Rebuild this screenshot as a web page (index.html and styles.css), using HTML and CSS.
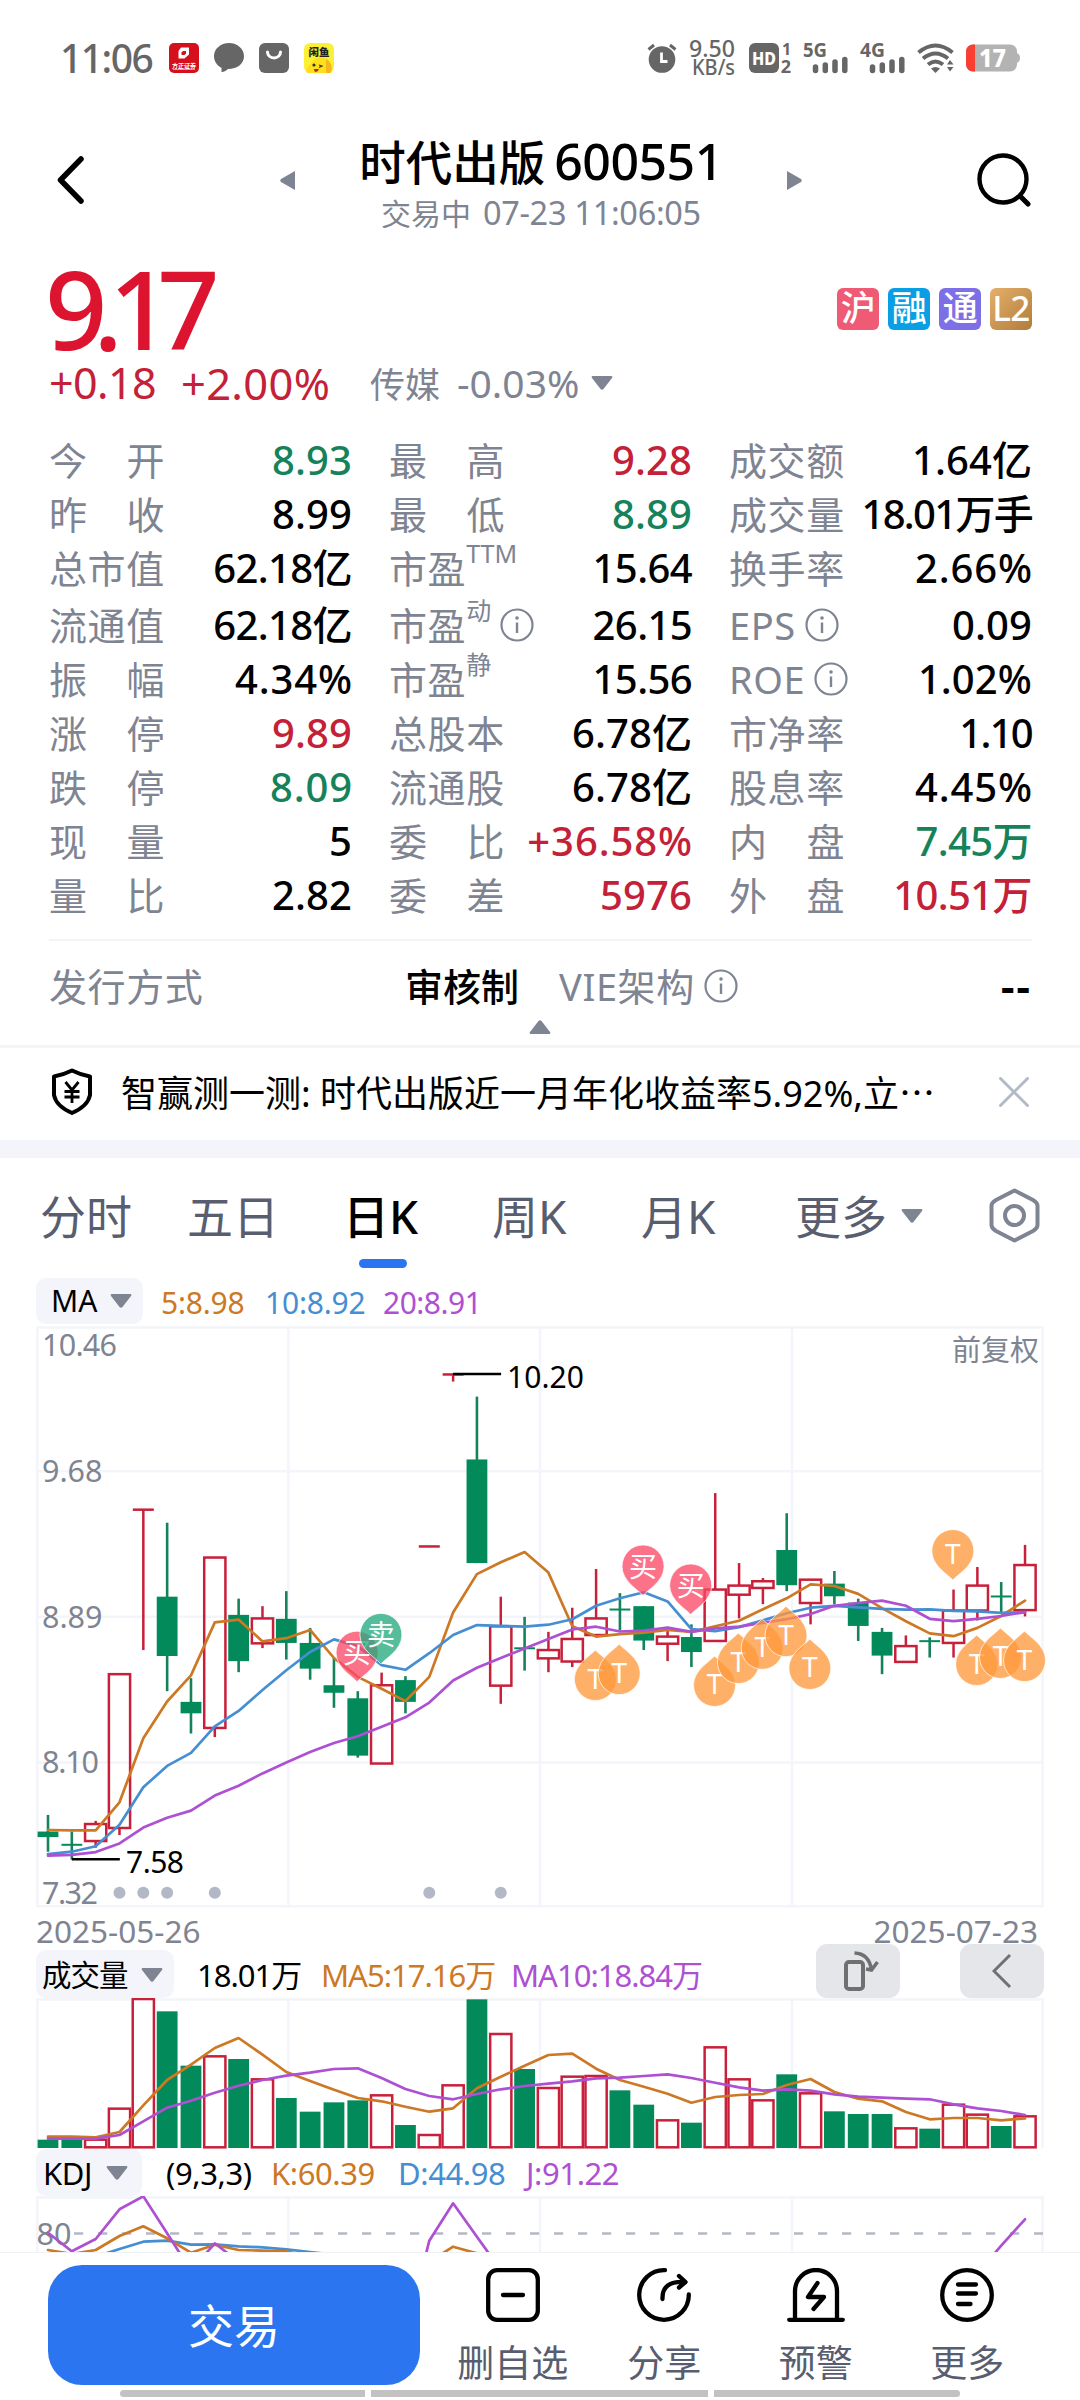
FILE: index.html
```html
<!DOCTYPE html>
<html lang="zh-CN">
<head>
<meta charset="utf-8">
<title>时代出版 600551</title>
<link rel="stylesheet" href="styles.css">
</head>
<body>
<svg class="defs" width="0" height="0">
  <symbol id="info" viewBox="0 0 34 34"><circle cx="17" cy="17" r="15.5" fill="none" stroke="currentColor" stroke-width="2.2"/><path d="M17 14.5V25" stroke="currentColor" stroke-width="2.4"/><circle cx="17" cy="10" r="1.8" fill="currentColor"/></symbol>
  <symbol id="tri" viewBox="0 0 22 14"><path d="M1.5 0H20.500Q22 .5 21 2L12.500 13Q11 14.500 9.500 13L1 2Q0 .5 1.500 0Z" fill="currentColor"/></symbol>
</svg>

<header class="status">
  <span class="clock">11:06</span>
  <div class="apps">
    <svg width="30" height="30" viewBox="0 0 30 30"><rect width="30" height="30" rx="5" fill="#d50f1c"/><path d="M12 4.500h8v7l-4.500 4H9.500V8z" fill="#fff"/><path d="M14 8h3v2.500l-1.500 1.500h-3v-2.500z" fill="#d50f1c"/><text x="15" y="24.500" font-size="6" font-weight="700" fill="#fff" text-anchor="middle">方正证券</text><path d="M4 26.500h22" stroke="#fff" stroke-width=".8" opacity=".7"/></svg>
    <svg width="30" height="30" viewBox="0 0 30 30"><path d="M15 0C6.500 0 0 6 0 13.200c0 5 3 9.300 7.500 11.600V29c3 0 5-1.500 6.500-3C23.500 26 30 20.500 30 13.200 30 6 23.500 0 15 0Z" fill="#666"/></svg>
    <svg width="30" height="30" viewBox="0 0 30 30"><rect width="30" height="30" rx="6" fill="#666"/><path d="M8.500 9a6.500 6 0 0 0 13 0" fill="none" stroke="#fff" stroke-width="3" stroke-linecap="round"/></svg>
    <svg width="30" height="30" viewBox="0 0 30 30"><rect width="30" height="30" rx="6" fill="#fbf035"/><path d="M3 30c-3-6 4-8 6-12 4-5 12-4 15-1 4 3 5 9 3 13z" fill="#ffe01a"/><path d="M22 16c6 3 7 10 4 14h-4z" fill="#f5b81c"/><circle cx="10" cy="22" r="1.600" fill="#333"/><path d="M15 22l3 1-3 1.500" fill="none" stroke="#333" stroke-width="1.200"/><path d="M10 26h5q-1 3-3 3t-2-3" fill="#b03020"/><text x="15" y="13" font-size="10.500" font-weight="900" fill="#222" text-anchor="middle">闲鱼</text></svg>
  </div>
  <div class="sys">
    <svg width="30" height="30" viewBox="0 0 30 30"><circle cx="15" cy="16.500" r="13.300" fill="#666"/><path d="M1.500 6.500L7 2M28.500 6.500L23 2" stroke="#666" stroke-width="3"/><path d="M14.500 9.500V18.500H20.500" fill="none" stroke="#fff" stroke-width="2.800"/></svg>
    <svg class="speed" width="48" height="38" viewBox="0 0 48 38"><text x="1" y="17.500" font-size="24" font-weight="500" textLength="46" lengthAdjust="spacingAndGlyphs">9.50</text><text x="4" y="35.500" font-size="21" font-weight="500" textLength="43" lengthAdjust="spacingAndGlyphs">KB/s</text></svg>
    <svg class="hd" width="44" height="34" viewBox="0 0 44 34"><rect y="2" width="30" height="30" rx="6" fill="#666"/><text x="3" y="23.500" font-size="18" font-weight="800" fill="#fff" textLength="24" lengthAdjust="spacingAndGlyphs">HD</text><text x="37.500" y="14" font-size="16" font-weight="700" fill="#666" text-anchor="middle">1</text><text x="37" y="31.500" font-size="18" font-weight="700" fill="#666" text-anchor="middle">2</text></svg>
    <svg class="g5" width="45" height="32" viewBox="0 0 45 32"><text y="15" font-size="19.500" font-weight="700" fill="#666" textLength="24" lengthAdjust="spacingAndGlyphs">5G</text><path d="M12.500 25v3.500M22.300 23v5.500M32 20v8.500M41.800 17.500v11" stroke="#666" stroke-width="5.500" stroke-linecap="round"/></svg>
    <svg class="g4" width="45" height="32" viewBox="0 0 45 32"><text y="15" font-size="19.500" font-weight="700" fill="#666" textLength="25" lengthAdjust="spacingAndGlyphs">4G</text><path d="M12.500 25v3.500M22.300 23v5.500M32 20v8.500M41.800 17.500v11" stroke="#666" stroke-width="5.500" stroke-linecap="round"/></svg>
    <svg class="wifi" width="38" height="30" viewBox="0 0 38 30"><path d="M1.500 9.500Q18.500-4.500 35.500 9.500M6 15.500Q18.500 5.500 31 15.500M11 21.500Q18.500 15.500 26 21.500" fill="none" stroke="#666" stroke-width="4"/><path d="M14 25.500q4.500-3 9 0L18.500 30z" fill="#666"/><path d="M30 21.500l3-4.500 3.500 4.500zM30 24l3 4.500 3.500-4.500z" fill="#666"/></svg>
    <svg width="54" height="28" viewBox="0 0 54 28"><path d="M50 9q4 .5 4 5t-4 5z" fill="#b3b3b3"/><rect width="51" height="27" y=".5" rx="7" fill="#b3b3b3"/><path d="M9 .5H7a7 7 0 0 0-7 7v13a7 7 0 0 0 7 7h2z" fill="#fa3e32"/><text x="13" y="22.500" font-size="24" font-weight="800" fill="#fff" textLength="27" lengthAdjust="spacingAndGlyphs">17</text></svg>
  </div>
</header>

<nav class="head">
  <svg width="28" height="48" viewBox="0 0 28 48"><path d="M25 3L4.500 24L25 45" fill="none" stroke="#000" stroke-width="5.500" stroke-linecap="round" stroke-linejoin="round"/></svg>
  <svg class="prev" width="15" height="21" viewBox="0 0 15 21"><path d="M15 1v19L1 12Q-.5 10.500 1 9z" fill="#7f8492"/></svg>
  <div class="title">
    <h1>时代出版<span>600551</span></h1>
    <p>交易中 <span>07-23 11:06:05</span></p>
  </div>
  <svg class="next" width="15" height="21" viewBox="0 0 15 21"><path d="M0 1v19L14 12Q15.500 10.500 14 9z" fill="#7f8492"/></svg>
  <svg class="search" width="54" height="54" viewBox="0 0 54 54"><circle cx="26" cy="26" r="23.500" fill="none" stroke="#000" stroke-width="4.400"/><path d="M43 43L51 51" stroke="#000" stroke-width="5" stroke-linecap="round"/></svg>
</nav>

<section class="quote">
  <div class="top">
    <strong>9.17</strong>
    <div class="badges"><span class="hu">沪</span><span class="rong">融</span><span class="tong">通</span><span class="l2">L2</span></div>
  </div>
  <div class="change"><span class="chg">+0.18</span><span class="pct">+2.00%</span><span class="sector">传媒</span><span class="sec-pct">-0.03%</span><svg class="tri" width="22" height="14"><use href="#tri"/></svg></div>
</section>

<section class="stats">
  <div><label><i>今</i><i>开</i></label><b class="dn">8.93</b></div>
  <div><label><i>最</i><i>高</i></label><b class="up">9.28</b></div>
  <div><label>成交额</label><b>1.64亿</b></div>
  <div><label><i>昨</i><i>收</i></label><b>8.99</b></div>
  <div><label><i>最</i><i>低</i></label><b class="dn">8.89</b></div>
  <div><label>成交量</label><b class="tt">18.01万手</b></div>
  <div><label>总市值</label><b class="t">62.18亿</b></div>
  <div><label>市盈<sup>TTM</sup></label><b class="t">15.64</b></div>
  <div><label>换手率</label><b class="w">2.66%</b></div>
  <div class="r4"><label>流通值</label><b class="t">62.18亿</b></div>
  <div class="r4"><label>市盈<sup>动</sup><svg class="info"><use href="#info"/></svg></label><b class="t">26.15</b></div>
  <div class="r4"><label>EPS<svg class="info"><use href="#info"/></svg></label><b>0.09</b></div>
  <div><label><i>振</i><i>幅</i></label><b class="w">4.34%</b></div>
  <div><label>市盈<sup>静</sup></label><b class="t">15.56</b></div>
  <div><label>ROE<svg class="info"><use href="#info"/></svg></label><b>1.02%</b></div>
  <div><label><i>涨</i><i>停</i></label><b class="up">9.89</b></div>
  <div><label>总股本</label><b>6.78亿</b></div>
  <div><label>市净率</label><b class="tt">1.10</b></div>
  <div><label><i>跌</i><i>停</i></label><b class="dn w">8.09</b></div>
  <div><label>流通股</label><b>6.78亿</b></div>
  <div><label>股息率</label><b class="w">4.45%</b></div>
  <div><label><i>现</i><i>量</i></label><b>5</b></div>
  <div><label><i>委</i><i>比</i></label><b class="up w">+36.58%</b></div>
  <div><label><i>内</i><i>盘</i></label><b class="dn t">7.45万</b></div>
  <div><label><i>量</i><i>比</i></label><b>2.82</b></div>
  <div><label><i>委</i><i>差</i></label><b class="up">5976</b></div>
  <div><label><i>外</i><i>盘</i></label><b class="up t">10.51万</b></div>
</section>

<section class="issue">
  <div><label>发行方式</label><b>审核制</b></div>
  <div><label>VIE架构<svg class="info"><use href="#info"/></svg></label><b class="dash">--</b></div>
</section>
<div class="fold"><svg width="22" height="14"><use href="#tri"/></svg></div>

<section class="notice">
  <svg width="42" height="48" viewBox="0 0 42 48"><path d="M21 2.500Q30 7 39 8.500V27Q37 38 21 45Q5 38 3 27V8.500Q12 7 21 2.500Z" fill="none" stroke="#000" stroke-width="4" stroke-linejoin="round"/><path d="M14.500 14L21 22L27.500 14M21 22V35M13.500 23.500H28.500M13.500 29H28.500" fill="none" stroke="#000" stroke-width="2.800"/></svg>
  <p>智赢测一测: 时代出版近一月年化收益率5.92%,立<span>⋯</span></p>
  <svg class="close" width="32" height="30" viewBox="0 0 32 30"><path d="M2.500 1.500L29.500 28.500M29.500 1.500L2.500 28.500" stroke="#b2b9c7" stroke-width="3" stroke-linecap="round"/></svg>
</section>

<section class="tabs">
  <span>分时</span><span>五日</span><span class="on">日K</span><span>周K</span><span>月K</span><span class="more">更多<svg width="22" height="14"><use href="#tri"/></svg></span>
  <svg width="51" height="55" viewBox="0 0 51 55"><path d="M25.500 2.500L44 12Q48.500 14.500 48.500 18V37Q48.500 40.500 44 43L25.500 52.500L7 43Q2.500 40.500 2.500 37V18Q2.500 14.500 7 12Z" fill="none" stroke="#7f8492" stroke-width="4" stroke-linejoin="round"/><circle cx="25.500" cy="27.500" r="9.500" fill="none" stroke="#7f8492" stroke-width="4"/></svg>
</section>

<section class="legend ma">
  <span class="pill">MA<svg width="22" height="14"><use href="#tri"/></svg></span>
  <span class="c5">5:8.98</span><span class="c10">10:8.92</span><span class="c20">20:8.91</span>
</section>
<svg class="plot" id="kline" width="1080" height="584" viewBox="0 0 1080 584">
  <path class="grid" d="M37 3.500H1043M37 147.300H1043M37 292.800H1043M37 438.400H1043M37 582.300H1043M37.300 3V583M288.300 3V583M540 3V583M792 3V583M1042.500 3V583"/>
  <g class="axis">
    <text x="42" y="31.500" textLength="75">10.46</text><text x="42" y="158">9.68</text><text x="42" y="303.500">8.89</text><text x="42" y="449" textLength="57">8.10</text><text x="42" y="580" textLength="56">7.32</text>
    <text x="952" y="37" class="adj">前复权</text>
  </g>
</svg>
<div class="dates"><span>2025-05-26</span><span>2025-07-23</span></div>

<section class="legend vol">
  <span class="pill">成交量<svg width="22" height="14"><use href="#tri"/></svg></span>
  <span>18.01万</span><span class="c5">MA5:17.16万</span><span class="c20">MA10:18.84万</span>
  <span class="btn rotate"><svg width="36" height="40" viewBox="0 0 36 40"><rect x="2" y="11" width="17" height="27" rx="3" fill="none" stroke="#707070" stroke-width="4"/><path d="M10.500 2Q25 2.500 27.500 19M22 18l5.500 1L33.500 11" fill="none" stroke="#707070" stroke-width="3.500"/></svg></span>
  <span class="btn"><svg width="20" height="36" viewBox="0 0 20 36"><path d="M18 2L2 18L18 34" fill="none" stroke="#707070" stroke-width="3"/></svg></span>
</section>
<svg class="plot" id="volume" width="1080" height="151" viewBox="0 0 1080 151">
  <path class="grid" d="M36 1.500H1044M37.300 0V150M288.300 0V150M540 0V150M792 0V150M1042.500 0V150"/>
</svg>

<section class="legend kdj">
  <span class="pill">KDJ<svg width="22" height="14"><use href="#tri"/></svg></span>
  <span>(9,3,3)</span><span class="c5">K:60.39</span><span class="c10">D:44.98</span><span class="c20">J:91.22</span>
</section>
<svg class="plot" id="kdj" width="1080" height="56" viewBox="0 0 1080 56">
  <path class="grid" d="M36 1.500H1044M37.300 0V56M288.300 0V56M540 0V56M792 0V56M1042.500 0V56"/>
  <path d="M74 37.500H1043" stroke="#b2b8c6" stroke-width="2.500" stroke-dasharray="9.200 14.800"/>
  <text x="36.500" y="48.500" class="axis" textLength="35">80</text>
</svg>

<footer class="bar">
  <button class="trade">交易</button>
  <div class="act"><svg width="54" height="54" viewBox="0 0 54 54"><rect x="2.200" y="2.200" width="49.600" height="49.600" rx="9" /><path d="M17 27H37"/></svg><span>删自选</span></div>
  <div class="act"><svg width="54" height="54" viewBox="0 0 54 54"><path d="M28 2.200A24.800 24.800 0 1 0 51.800 26.500M25.500 31C25 18 33 13.500 47 14M42 8l6.500 6L42 19.500"/></svg><span>分享</span></div>
  <div class="act"><svg width="58" height="54" viewBox="0 0 58 54"><path d="M2.200 51.800H55.800M8 51V23A21 21 0 0 1 50 23V51M30.500 15L21 29H37L26.500 41"/></svg><span>预警</span></div>
  <div class="act"><svg width="54" height="54" viewBox="0 0 54 54"><circle cx="27" cy="27" r="24.800"/><path d="M18 16.500H36M18 25.500H36M18 36H30.500"/></svg><span>更多</span></div>
</footer>
<div class="home"><i></i><i></i><i></i></div>
<script src="chart.js"></script>
</body>
</html>
```
FILE: styles.css
```css
* { box-sizing: border-box; margin: 0; padding: 0; }
body {
  width: 1080px; height: 2400px; overflow: hidden; background: #fff; color: #000;
  font-family: "Noto Sans", "Noto Sans CJK SC", sans-serif;
}
i { font-style: normal; }
svg { display: block; flex: none; }
.defs { position: absolute; }
b { font-weight: 500; }

.status { height: 116px; padding: 0 60px; display: flex; align-items: center; color: #666; }
.clock { width: 109px; font-size: 39px; font-weight: 500; letter-spacing: -1.5px; line-height: 40px; white-space: nowrap; }
.apps { display: flex; gap: 15px; }
.sys { margin-left: auto; display: flex; align-items: center; }
.speed { margin-left: 11px; fill: #666; overflow: visible; }
.hd { margin-left: 13px; }
.g5 { margin-left: 10px; }
.g4 { margin-left: 12px; }
.wifi { margin: 0 11px 0 12px; }

.head { height: 134px; padding: 0 49px 6px 56px; display: flex; align-items: center; }
.prev { margin-left: 196px; }
.title { width: 426px; margin: 7px 33px 0; text-align: center; white-space: nowrap; flex: none; }
.next { margin-right: auto; }
.title h1 { font-size: 46.500px; font-weight: 500; line-height: 58px; }
.title h1 span { font-size: 50px; letter-spacing: -.5px; margin-left: 9px; }
.title p { font-size: 30px; line-height: 44px; color: #7f8492; }
.title p span { font-size: 32.500px; letter-spacing: -.3px; margin-left: 4px; }

.quote { height: 170px; padding: 0 48px 0 49px; white-space: nowrap; }
.top { height: 107px; display: flex; justify-content: space-between; align-items: center; }
.top strong { font-size: 109px; line-height: 120px; font-weight: 500; color: #dc1430; letter-spacing: -14px; margin: 8px 0 0 -4px; }
.badges { display: flex; gap: 9px; margin-top: 11px; }
.badges span { width: 42px; height: 42px; border-radius: 6px; color: #fff; font-size: 35px; font-weight: 500; line-height: 40px; text-align: center; letter-spacing: -.5px; }
.hu { background: #ef5a74; }
.rong { background: #0a9fe5; }
.tong { background: #7d6fe5; }
.l2 { background: linear-gradient(135deg, #e6b06a, #b07c3c); }
.change { display: flex; align-items: center; height: 51px; color: #c42139; font-size: 43px; }
.chg { width: 132px; letter-spacing: -.6px; }
.pct { width: 189px; font-size: 43.500px; letter-spacing: .3px; }
.sector { font-size: 35px; color: #7f8492; width: 87px; }
.sec-pct { font-size: 39px; color: #7f8492; width: 134px; }
.tri, .pill svg, .more svg, .fold svg { color: #7f8492; }

.stats { padding: 13px 48px 0 49px; display: grid; grid-template-columns: repeat(3, 303px); column-gap: 37px; grid-template-rows: 54px 54px 54px 57px repeat(5, 54px); }
.stats > div, .issue > div { display: flex; justify-content: space-between; align-items: center; white-space: nowrap; line-height: 54px; }
.stats > .r4 { padding-top: 3px; }
.stats label, .issue label { display: flex; justify-content: space-between; align-items: center; min-width: 116px; font-size: 38px; letter-spacing: .6px; color: #7f8492; }
.stats label:has(svg), .stats label:has(sup), .issue label { justify-content: flex-start; }
.stats sup { align-self: flex-start; font-size: 25px; line-height: 26px; letter-spacing: 0; margin-top: -1px; }
.info { width: 34px; height: 34px; margin-left: 9px; }
.stats b { font-size: 40px; letter-spacing: .1px; }
.stats .w { letter-spacing: .9px; margin-right: -1px; }
.stats .t { letter-spacing: -.6px; }
.stats .tt { letter-spacing: -1.700px; }
.up { color: #c42139; }
.dn { color: #16825a; }

.issue { margin: 17px 48px 0 49px; border-top: 2px solid #f3f4f7; height: 81px; padding-top: 11px; display: grid; grid-template-columns: 470px 473px; column-gap: 40px; align-items: center; }
.issue b { font-size: 38px; }
.issue .dash { font-size: 42px; font-weight: 700; letter-spacing: 2px; }
.fold { height: 28px; border-bottom: 3px solid #f3f4f7; display: flex; justify-content: center; }
.fold svg { transform: scaleY(-1); }

.notice { height: 92px; padding: 0 50px 4px 51px; display: flex; align-items: center; }
.notice p { margin-left: 28px; font-size: 36px; line-height: 46px; white-space: nowrap; }
.notice span { font-family: "Noto Sans CJK SC", sans-serif; }
.close { margin-left: auto; }

.tabs { border-top: 18px solid #f4f5fa; height: 138px; padding: 0 0 5px 40px; display: grid; grid-template-columns: 147px 156px 149px 149px 154px 194px 51px; align-items: center; font-size: 46px; line-height: 60px; color: #585d70; white-space: nowrap; }
.tabs .on { color: #000; font-weight: 500; position: relative; }
.tabs .on::after { content: ""; position: absolute; left: 16px; bottom: -22px; width: 48px; height: 9px; border-radius: 5px; background: #2b76f0; }
.more { display: flex; align-items: center; gap: 14px; }

.legend { display: flex; font-size: 31px; white-space: nowrap; padding-left: 36px; }
.legend > span { flex: none; }
.pill { display: flex; align-items: center; border-radius: 10px; background: #f4f5fa; }
.c5 { color: #cd7824; }
.c10 { color: #468ed2; }
.c20 { color: #ae50d2; }
.ma { height: 46px; line-height: 50px; font-size: 30px; }
.ma .pill { width: 107px; padding-left: 15px; gap: 13px; margin-right: 18px; }
.ma .c5 { width: 104px; letter-spacing: -.2px; }
.ma .c10 { width: 118px; letter-spacing: -.2px; }
.ma .c20 { letter-spacing: -.5px; }

.grid { fill: none; stroke: #f4f5fa; stroke-width: 2.500; }
.axis { font-size: 30.500px; fill: #7f8492; }
.adj { font-size: 29px; }
.wick-up, .box-up { stroke: #c8203a; stroke-width: 2.500; fill: none; }
.wick-dn { stroke: #16825a; stroke-width: 2.600; }
.box-dn { fill: #038a5b; }
.line { fill: none; stroke-width: 2.700; stroke-linejoin: round; stroke-linecap: round; }
.pin { stroke: #fff; stroke-width: 1; fill-opacity: .77; stroke-opacity: .7; }
.pin-text { fill: #fff; font-size: 28px; text-anchor: middle; }
.mark { font-size: 30px; fill: #000; }

.dates { height: 36px; padding: 5px 42px 0 36px; display: flex; justify-content: space-between; font-size: 31.500px; line-height: 36px; color: #7f8492; }
.vol { height: 54px; line-height: 60px; align-items: stretch; }
.vol .pill { width: 138px; height: 48px; margin: 6px 23px 0 0; padding-left: 6px; gap: 13px; font-size: 29.500px; }
.vol > span { letter-spacing: -1px; padding-top: 1px; }
.vol > span:nth-child(2) { width: 124px; }
.vol > span:nth-child(3) { width: 190px; }
.vol > span:nth-child(4) { width: 305px; }
.vol > .btn { width: 84px; height: 54px; margin-right: 60px; padding: 0; border-radius: 11px; background: #e5e6ea; display: flex; justify-content: center; align-items: center; }
.vol > .rotate { padding-left: 8px; }
.kdj { height: 47px; line-height: 48px; }
.kdj > span { letter-spacing: -.4px; }
.kdj .pill { width: 106px; padding-left: 7px; gap: 14px; margin-right: 24px; font-size: 31px; }
.kdj > span:nth-child(2) { width: 105px; }
.kdj > span:nth-child(3) { width: 127px; }
.kdj > span:nth-child(4) { width: 128px; }

.bar { height: 136px; border-top: 1px solid #f0f1f4; padding: 12px 0 0 48px; display: flex; }
.trade { width: 372px; height: 120px; margin-right: 17px; border: 0; border-radius: 34px; background: #2b76f0; color: #fff; font: 46px/120px "Noto Sans", "Noto Sans CJK SC", sans-serif; }
.act { width: 151.500px; padding-top: 3px; display: flex; flex-direction: column; align-items: center; gap: 16px; font-size: 37px; line-height: 50px; color: #585d70; }
.act svg { fill: none; stroke: #000; stroke-width: 4.300; stroke-linecap: round; stroke-linejoin: round; }
.home { margin: 2px 120px 0; height: 7px; display: grid; grid-template-columns: 245px 337px 246px; gap: 6px; }
.home i { background: #c2c2c2; }
.home i:first-child { border-radius: 4px 0 0 4px; }
.home i:last-child { border-radius: 0 4px 4px 0; }
```
FILE: chart.js
```js
const NS = "http://www.w3.org/2000/svg";
const STEP = 23.83;
const X = i => 48 + i * STEP;

function add(parent, tag, attrs, text) {
  const el = document.createElementNS(NS, tag);
  for (const k in attrs) el.setAttribute(k, attrs[k]);
  if (text) el.textContent = text;
  parent.appendChild(el);
  return el;
}
function line(svg, cls, values, Y, first = 0) {
  const color = { c5: "#cd7824", c10: "#468ed2", c20: "#ae50d2" }[cls];
  const points = values.map((v, i) => X(i + first).toFixed(1) + "," + Y(v).toFixed(1)).join(" ");
  add(svg, "polyline", { class: "line", stroke: color, points });
}

// Daily candles: direction (1 rise, 0 fall), high, body top, body bottom, low
const candles = [
  [0,1277,1319,1333,1370],[0,1319,1350,1355,1390],[1,1292,1300,1343,1360],[1,921,921,1310,1328],
  [1,505,505,505,860],[0,538,725,875,964],[0,931,991,1020,1071],[1,626,626,1057,1080],
  [0,730,771,888,916],[1,749,780,843,855],[0,711,781,842,884],[0,804,842,907,935],
  [0,880,949,968,1006],[0,964,982,1127,1132],[1,917,949,1147,1147],[0,926,936,991,1020],
  [1,598,598,598,598],[1,163,163,163,181],[0,219,378,640,640],[1,725,800,950,996],
  [0,776,853,858,912],[1,814,860,881,916],[1,753,832,889,903],[1,655,780,822,825],
  [0,716,755,760,810],[0,749,749,836,860],[1,810,826,844,888],[0,795,827,865,903],
  [1,463,707,837,837],[1,640,697,720,780],[1,678,686,703,744],[0,514,607,696,711],
  [1,682,682,741,795],[0,660,692,724,744],[0,730,740,799,837],[0,804,814,874,921],
  [1,823,850,890,890],[0,828,835,840,879],[1,707,760,842,879],[1,650,697,760,785],
  [0,688,722,727,765],[1,594,645,759,775]
];
const ma5 = [1315,1316,1316,1245,1083,990,924,790,783,838,830,809,880,928,958,989,928,765,668,638,612,664,800,826,820,816,809,814,800,786,757,729,694,698,718,754,787,818,825,804,774,735];
const ma10 = [1376,1370,1356,1302,1207,1153,1120,1053,1014,961,911,865,833,850,898,910,868,822,797,799,801,796,782,748,729,714,737,807,812,802,785,767,753,748,752,756,758,757,761,762,766,764];
const ma20 = [1380,1378,1371,1349,1309,1284,1266,1228,1203,1172,1144,1118,1095,1078,1054,1030,993,937,905,880,856,832,808,801,813,811,803,814,805,801,791,782,769,748,741,735,748,781,787,781,774,764];

const k = document.getElementById("kline");
const Y = v => v / 2.529 - 14;
candles.forEach(([rise, hi, top, bot, lo], i) => {
  const x = X(i);
  if (rise) {
    if (hi < top) add(k, "path", { class: "wick-up", d: `M${x} ${Y(hi)}V${Y(top)}` });
    if (lo > bot) add(k, "path", { class: "wick-up", d: `M${x} ${Y(bot)}V${Y(lo)}` });
    if (top === bot) add(k, "path", { class: "wick-up", d: `M${x - 10.5} ${Y(top)}H${x + 10.5}` });
    else add(k, "rect", { class: "box-up", x: x - 10.6, y: Y(top), width: 21.2, height: Y(bot) - Y(top) });
  } else {
    add(k, "path", { class: "wick-dn", d: `M${x} ${Y(hi)}V${Y(lo)}` });
    add(k, "rect", { class: "box-dn", x: x - 10.4, y: Y(top), width: 20.8, height: Y(bot) - Y(top) });
  }
});
line(k, "c5", ma5, Y);
line(k, "c10", ma10, Y);
line(k, "c20", ma20, Y);

[3, 4, 5, 7, 16, 19].forEach(i => add(k, "circle", { cx: X(i), cy: Y(1474), r: 6, fill: "#b2b8c6" }));
add(k, "path", { d: `M${X(1)} ${Y(1389)}h48M${X(17)} ${Y(162)}h48`, stroke: "#000", "stroke-width": 2.4 });
add(k, "text", { class: "mark", x: 126, y: 548.5, textLength: 58 }, "7.58");
add(k, "text", { class: "mark", x: 507, y: 64, textLength: 77 }, "10.20");

// Trade pins: slot, tip position, label, colour, direction (1 tip down, -1 tip up)
const pins = [
  [13,940,"买","#fa4765",1],[14,895,"卖","#23a97e",1],[25,722,"买","#fa4765",1],[27,770,"买","#fa4765",1],
  [23,860,"T","#ff983a",-1],[24,845,"T","#ff983a",-1],[28,875,"T","#ff983a",-1],[29,817,"T","#ff983a",-1],
  [30,781,"T","#ff983a",-1],[31,749,"T","#ff983a",-1],[32,832,"T","#ff983a",-1],[38,683,"T","#ff983a",1],
  [39,822,"T","#ff983a",-1],[40,804,"T","#ff983a",-1],[41,812,"T","#ff983a",-1]
];
pins.forEach(([i, tip, label, fill, dir]) => {
  const g = add(k, "g", { transform: `translate(${X(i) - (i === 41 ? .5 : .7)} ${Y(tip)})` });
  add(g, "path", { class: "pin", fill, transform: `scale(1 ${dir})`, d: "M0 0C-4-5-21-14-21-29A21 21.500 0 0 1 21-29C21-14 4-5 0 0Z" });
  add(g, "text", { class: "pin-text", y: dir > 0 ? (label === "T" ? -16 : -18.5) : 38.500 }, label);
});

// Volume bars: direction and top edge
const volumes = [[0,659],[0,659],[1,659],[1,566],[1,237],[0,274],[0,437],[1,409],[0,417],[1,478],[0,534],[0,575],[0,547],[0,541],[1,526],[0,615],[1,645],[1,496],[0,238],[1,342],[0,447],[1,504],[1,470],[1,468],[0,511],[0,554],[1,601],[0,608],[1,382],[1,478],[1,541],[0,463],[1,520],[0,574],[0,582],[0,582],[1,625],[0,626],[1,554],[1,584],[0,618],[1,589]];
const v5 = [650,650,652,636,556,480,434,384,354,404,456,483,509,534,544,560,575,565,505,470,437,405,401,446,480,500,521,548,531,525,522,495,477,516,536,544,576,598,594,594,601,595];
const v10 = [656,656,656,645,604,563,542,518,497,480,467,458,447,445,474,507,528,538,522,508,498,491,484,475,473,468,463,474,488,502,512,508,512,523,530,533,536,538,553,565,573,585];
const vol = document.getElementById("volume");
const VY = v => (v - 234) / 3;
volumes.forEach(([rise, top], i) => {
  const y = VY(top);
  if (rise) add(vol, "rect", { class: "box-up", x: X(i) - 10.6, y, width: 21.2, height: 149.3 - y });
  else add(vol, "rect", { class: "box-dn", x: X(i) - 10.4, y, width: 20.8, height: 150 - y });
});
line(vol, "c5", v5, VY);
line(vol, "c20", v10, VY);

const kdj = document.getElementById("kdj");
const KY = v => (v - 828) / 3;
line(kdj, "c10", [1010,987,965,962,974,973,979,982,988,996,1004], KY, 2);
line(kdj, "c5", [990,1002,990,948,919,955,998,974,990,992,994,1012], KY);
line(kdj, "c5", [1025,980,1000,1030], KY, 16);
line(kdj, "c20", [938,994,957,868,829,940,1052,970,1025], KY);
line(kdj, "c20", [1250,962,850,950,1050], KY, 15);
line(kdj, "c20", [1060,977,898], KY, 39);
```
